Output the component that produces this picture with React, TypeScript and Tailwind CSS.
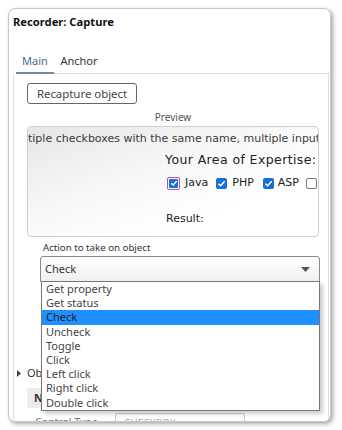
import React from "react";

const font = { fontFamily: '"Noto Sans", "Open Sans", sans-serif' };
const dv = { fontFamily: '"DejaVu Sans", sans-serif' };

function Check({ checked, focus }: { checked: boolean; focus?: boolean }) {
  if (!checked) {
    return <span className="block w-[11px] h-[11px] border border-[#777] rounded-[2px] bg-white" />;
  }
  if (focus) {
    return (
      <span className="flex w-[13px] h-[13px] border border-[#b04fb0] rounded-[2px] p-[1px]">
        <span className="flex items-center justify-center w-full h-full bg-[#1a6fd6] rounded-[1px]">
          <svg width="8" height="8" viewBox="0 0 10 10">
            <path d="M1.6 5.2 L4 7.5 L8.5 2.5" stroke="white" strokeWidth="1.8" fill="none" />
          </svg>
        </span>
      </span>
    );
  }
  return (
    <span className="flex items-center justify-center w-[11px] h-[11px] bg-[#1a6fd6] rounded-[2px]">
      <svg width="9" height="9" viewBox="0 0 10 10">
        <path d="M1.6 5.2 L4 7.5 L8.5 2.5" stroke="white" strokeWidth="1.7" fill="none" />
      </svg>
    </span>
  );
}

export default function App() {
  const items = [
    "Get property",
    "Get status",
    "Check",
    "Uncheck",
    "Toggle",
    "Click",
    "Left click",
    "Right click",
    "Double click",
  ];
  return (
    <div className="w-[342px] h-[430px] bg-white overflow-hidden relative" style={font}>
      <div className="absolute left-[8px] top-[8px] w-[323px] h-[414px] rounded-[7px] border border-[#c8c8c8] bg-white shadow-[2px_2px_4px_rgba(0,0,0,0.35)] overflow-hidden">
        <div className="pl-[4px] pt-[5px] text-[11.2px] font-bold text-[#111] leading-[16px]">Recorder: Capture</div>
        <div className="mt-[23px] flex pl-[7px] text-[11px] leading-[16px]">
          <div className="w-[38px] text-center text-[#4f6a88] pb-[3px] border-b-[2px] border-[#6f8aa8]">Main</div>
          <div className="w-[50px] text-center text-[#333] pb-[3px] border-b border-[#dedede]">Anchor</div>
          <div className="flex-1 border-b border-[#dedede]" />
        </div>
        <div className="ml-[4px] mr-[1px] border-l border-r border-[#dedede] h-[400px] relative flex flex-col">
          <div className="pl-[13px] pt-[9px] flex">
            <button className="block h-[21px] w-[110px] border border-[#666] rounded-[3px] text-[11.4px] text-[#444] leading-[19px] bg-white">
              Recapture object
            </button>
          </div>
          <div className="text-center text-[10px] text-[#555] leading-[12px] mt-[7px] pl-[4px]">Preview</div>
          <div className="ml-[13px] mr-[9px] mt-[3px] h-[111px] shrink-0 rounded-[4px] border border-[#cfcfcf] bg-[linear-gradient(160deg,#e6e6e6_0%,#f7f7f7_40%,#ffffff_70%)] overflow-hidden">
            <div className="whitespace-nowrap text-[11px] text-[#3a3a3a] leading-[16px] mt-[4px]" style={dv}>
              tiple checkboxes with the same name, multiple input
            </div>
            <div className="whitespace-nowrap pl-[137px] text-[12.5px] tracking-[0.4px] text-[#222] leading-[16px] mt-[5px]" style={dv}>
              Your Area of Expertise:
            </div>
            <div className="pl-[139px] mt-[7px] h-[16px] flex items-center text-[11px] text-[#222] leading-[16px]" style={dv}>
              <Check checked focus />
              <span className="ml-[5px]">Java</span>
              <span className="ml-[8px]"><Check checked /></span>
              <span className="ml-[5px]">PHP</span>
              <span className="ml-[9px]"><Check checked /></span>
              <span className="ml-[4px]">ASP</span>
              <span className="ml-[7px]"><Check checked={false} /></span>
            </div>
            <div className="pl-[138px] mt-[20px] text-[11px] text-[#222] leading-[16px]" style={dv}>
              Result:
            </div>
          </div>
          <div className="pl-[29px] mt-[4px] text-[9.7px] text-[#333] leading-[14px]">Action to take on object</div>
          <div className="ml-[26px] mr-[8px] mt-[1px] h-[26px] shrink-0 border border-[#8a8a8a] rounded-t-[3px] bg-[linear-gradient(#ffffff,#f0f0f0)] flex items-center justify-between pl-[4px] pr-[9px]">
            <span className="text-[11px] text-[#333]">Check</span>
            <svg width="9" height="5" viewBox="0 0 9 5">
              <path d="M0 0 L9 0 L4.5 5 Z" fill="#555" />
            </svg>
          </div>
          <div className="mt-[84px] h-[14px] flex items-center pl-[3px] text-[11px] text-[#333] leading-[14px]">
            <svg width="5" height="7" viewBox="0 0 5 7" className="mr-[5px]">
              <path d="M0 0 L4 3.5 L0 7 Z" fill="#444" />
            </svg>
            <span>Object properties</span>
          </div>
          <div className="ml-[13px] mr-[9px] mt-[8px] h-[20px] shrink-0 bg-[#ececec] flex items-center pl-[7px] text-[11px] font-bold text-[#333]">
            Name
          </div>
          <div className="ml-[13px] mt-[5px] flex items-start">
            <span className="pl-[8px] w-[88px] text-[10.5px] text-[#777] leading-[14px] mt-[2px]">Control Type</span>
            <span className="w-[130px] h-[20px] border border-[#ccc] rounded-[2px] text-[10px] text-[#aaa] pl-[8px] leading-[18px]">CHECKBOX</span>
          </div>
          {/* dropdown list */}
          <div className="absolute left-[27px] top-[207px] w-[279px] bg-white border border-[#777] shadow-[3px_3px_4px_rgba(0,0,0,0.2)]">
            {items.map((it) =>
              it === "Check" ? (
                <div key={it} className="h-[14.2px] leading-[14px] pl-[4px] text-[11px] text-[#222] bg-[#1e90ff]">
                  {it}
                </div>
              ) : (
                <div key={it} className="h-[14.2px] leading-[14px] pl-[4px] text-[11px] text-[#444]">
                  {it}
                </div>
              )
            )}
          </div>
        </div>
      </div>
    </div>
  );
}
